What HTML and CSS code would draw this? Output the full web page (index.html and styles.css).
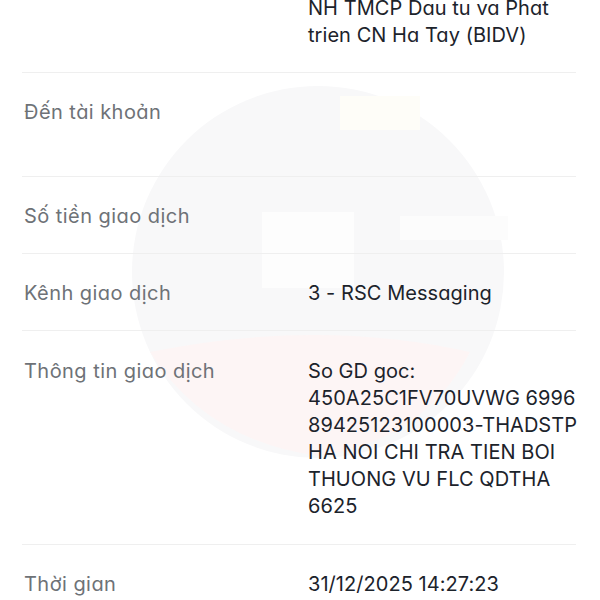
FILE: index.html
```html
<!DOCTYPE html>
<html lang="vi">
<head>
<meta charset="utf-8">
<title>Chi tiết giao dịch</title>
<link rel="stylesheet" href="styles.css">
</head>
<body>
<div class="screen">
  <svg class="watermark" width="600" height="600" viewBox="0 0 600 600" aria-hidden="true">
    <circle cx="318" cy="272" r="186" fill="#f8f8f9"/>
    <path d="M150 352 Q318 318 470 352 Q425 440 318 456 Q205 440 150 352 Z" fill="#fdf5f5"/>
    <rect x="262" y="212" width="92" height="76" fill="#fdfdfd"/>
    <rect x="400" y="216" width="108" height="24" fill="#fcfcfc"/>
    <rect x="340" y="96" width="80" height="34" fill="#fefdf8"/>
  </svg>
  <div class="list">
    <div class="row first">
      <div class="label"></div>
      <div class="value">NH TMCP Dau tu va Phat<br>trien CN Ha Tay (BIDV)</div>
    </div>
    <div class="row">
      <div class="label">Đến tài khoản</div>
      <div class="value"><br>&nbsp;</div>
    </div>
    <div class="row">
      <div class="label">Số tiền giao dịch</div>
      <div class="value">&nbsp;</div>
    </div>
    <div class="row">
      <div class="label">Kênh giao dịch</div>
      <div class="value">3 - RSC Messaging</div>
    </div>
    <div class="row tall">
      <div class="label">Thông tin giao dịch</div>
      <div class="value">So GD goc:<br>450A25C1FV70UVWG 6996<br>89425123100003-THADSTP<br>HA NOI CHI TRA TIEN BOI<br>THUONG VU FLC QDTHA<br>6625</div>
    </div>
    <div class="row last">
      <div class="label">Thời gian</div>
      <div class="value">31/12/2025 14:27:23</div>
    </div>
  </div>
</div>
</body>
</html>
```
FILE: styles.css
```css
html, body {
  margin: 0;
  padding: 0;
  background: #ffffff;
}
body {
  font-family: Inter, "Noto Sans", sans-serif;
  font-feature-settings: "cv11" 1;
  font-size: 20px;
  line-height: 27px;
  overflow: hidden;
}
.screen {
  position: relative;
  width: 600px;
  height: 600px;
  overflow: hidden;
}
.watermark {
  position: absolute;
  left: 0;
  top: 0;
}
.list {
  position: relative;
  margin: -5px 24px 0 22px;
}
.row {
  display: grid;
  grid-template-columns: 286px 1fr;
  padding: 26px 0 23px;
  border-bottom: 1px solid #efefef;
}
.row.first {
  padding-top: 0;
}
.row.tall {
  padding-top: 27px;
  padding-bottom: 24px;
}
.row.last {
  border-bottom: none;
}
.label {
  padding-left: 2px;
  color: #6e7277;
  letter-spacing: 0.45px;
}
.value {
  color: #1c232b;
  letter-spacing: 0.05px;
  white-space: nowrap;
}
```
